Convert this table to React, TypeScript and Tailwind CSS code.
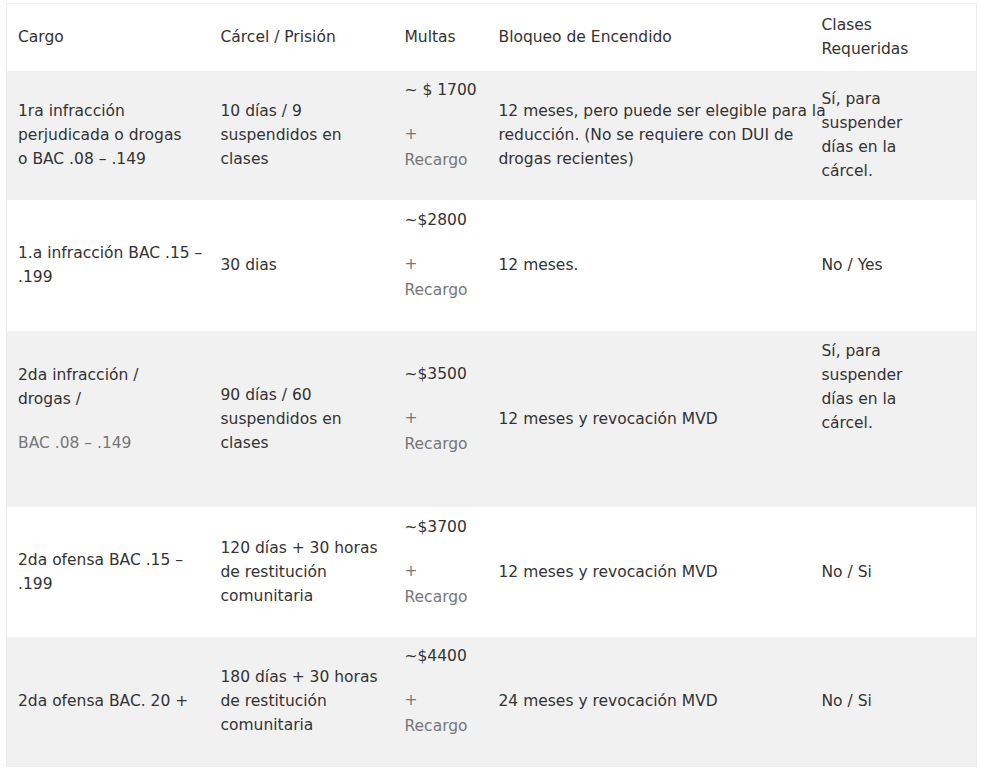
import { ReactNode } from "react";

type Cell = ReactNode;

const muted = "text-[#777]";

// multas cell: amount + "+ Recargo"
const Multa = ({ amount }: { amount: string }) => (
  <div>
    <p className="mb-[19px]">{amount}</p>
    <p className={`mb-[19px] leading-[26px] ${muted}`}>
      +
      <br />
      Recargo
    </p>
  </div>
);

const rows: { h: string; bg: string; cells: Cell[] }[] = [
  {
    h: "h-[129px]",
    bg: "bg-[#f1f1f1]",
    cells: [
      <>
        1ra infracción
        <br />
        perjudicada o drogas
        <br />o BAC .08 – .149
      </>,
      <>
        10 días / 9
        <br />
        suspendidos en
        <br />
        clases
      </>,
      <Multa amount="~ $ 1700" />,
      <>
        12 meses, pero puede ser elegible para la
        <br />
        reducción. (No se requiere con DUI de
        <br />
        drogas recientes)
      </>,
      <>
        Sí, para
        <br />
        suspender
        <br />
        días en la
        <br />
        cárcel.
      </>,
    ],
  },
  {
    h: "h-[131px]",
    bg: "bg-white",
    cells: [
      <>
        1.a infracción BAC .15 –
        <br />
        .199
      </>,
      <>30 dias</>,
      <Multa amount="~$2800" />,
      <>12 meses.</>,
      <>No / Yes</>,
    ],
  },
  {
    h: "h-[176px]",
    bg: "bg-[#f1f1f1]",
    cells: [
      <div>
        <p className="mb-5">
          2da infracción /
          <br />
          drogas /
        </p>
        <p className={`mb-5 ${muted}`}>BAC .08 – .149</p>
      </div>,
      <>
        90 días / 60
        <br />
        suspendidos en
        <br />
        clases
      </>,
      <Multa amount="~$3500" />,
      <>12 meses y revocación MVD</>,
      <div>
        <p className="mb-5">
          Sí, para
          <br />
          suspender
          <br />
          días en la
          <br />
          cárcel.
        </p>
        <p className="mb-5">&nbsp;</p>
      </div>,
    ],
  },
  {
    h: "h-[130px]",
    bg: "bg-white",
    cells: [
      <>
        2da ofensa BAC .15 –
        <br />
        .199
      </>,
      <>
        120 días + 30 horas
        <br />
        de restitución
        <br />
        comunitaria
      </>,
      <Multa amount="~$3700" />,
      <>12 meses y revocación MVD</>,
      <>No / Si</>,
    ],
  },
  {
    h: "h-[130px]",
    bg: "bg-[#f1f1f1]",
    cells: [
      <>2da ofensa BAC. 20 +</>,
      <>
        180 días + 30 horas
        <br />
        de restitución
        <br />
        comunitaria
      </>,
      <Multa amount="~$4400" />,
      <>24 meses y revocación MVD</>,
      <>No / Si</>,
    ],
  },
];

export default function App() {
  return (
    <div className="min-h-screen bg-white pt-[3px] pl-1.5 font-['DejaVu_Sans',sans-serif] text-[15.5px] leading-6 text-[#333]">
      <table className="w-[970px] table-fixed border-collapse border border-[#ececec]">
        <colgroup>
          <col className="w-[203px]" />
          <col className="w-[184px]" />
          <col className="w-[94px]" />
          <col className="w-[323px]" />
          <col className="w-[166px]" />
        </colgroup>
        <thead>
          <tr className="h-[67px] bg-white">
            <th className="px-[11px] py-[7px] text-left font-normal whitespace-nowrap">Cargo</th>
            <th className="px-[11px] py-[7px] text-left font-normal whitespace-nowrap">Cárcel / Prisión</th>
            <th className="px-[11px] py-[7px] text-left font-normal whitespace-nowrap">Multas</th>
            <th className="px-[11px] py-[7px] text-left font-normal whitespace-nowrap">Bloqueo de Encendido</th>
            <th className="px-[11px] py-[7px] text-left font-normal whitespace-nowrap">
              Clases
              <br />
              Requeridas
            </th>
          </tr>
        </thead>
        <tbody>
          {rows.map((r, i) => (
            <tr key={i} className={`${r.h} ${r.bg}`}>
              {r.cells.map((c, j) => (
                <td key={j} className="px-[11px] py-[7px] align-middle whitespace-nowrap">
                  {c}
                </td>
              ))}
            </tr>
          ))}
        </tbody>
      </table>
    </div>
  );
}
